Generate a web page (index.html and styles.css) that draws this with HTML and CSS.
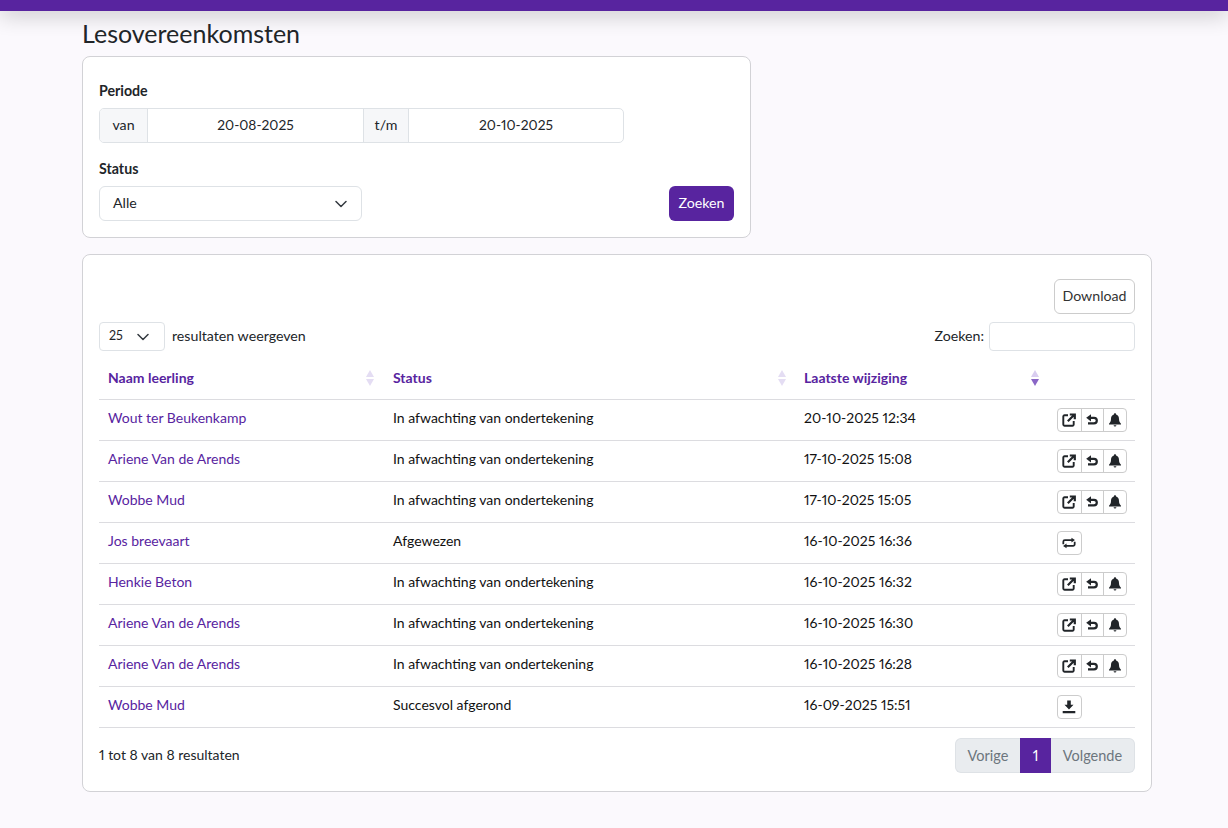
FILE: index.html
```html
<!DOCTYPE html>
<html lang="nl">
<head>
<meta charset="utf-8">
<title>Lesovereenkomsten</title>
<link rel="stylesheet" href="styles.css">
</head>
<body>
<svg width="0" height="0" class="defs">
  <symbol id="i-open" viewBox="0 0 14 14"><path d="M6 2.300H2.500A1.200 1.200 0 0 0 1.300 3.500V11.500A1.200 1.200 0 0 0 2.500 12.700H10.500A1.200 1.200 0 0 0 11.700 11.500V8" fill="none" stroke="currentColor" stroke-width="1.900"/><path d="M5.800 8.200 12 2M7.800 1.500H12.800V6.300" fill="none" stroke="currentColor" stroke-width="2.200"/></symbol>
  <symbol id="i-undo" viewBox="0 0 14 14"><path d="M4.500 4.800H9A2.800 2.800 0 0 1 9 10.400H3" fill="none" stroke="currentColor" stroke-width="2.200"/><path d="M6 1.200V8.400L1.200 4.800Z" fill="currentColor"/></symbol>
  <symbol id="i-bell" viewBox="0 0 14 14"><path d="M7 .3C7.700 .3 8.100 .8 8.100 1.400 10.300 2 11 3.800 11 6 11 8.500 11.800 9.500 13 10.800V11.500H1V10.800C2.200 9.500 3 8.500 3 6 3 3.800 3.700 2 5.900 1.400 5.900 .8 6.300 .3 7 .3ZM5.600 12.200H8.400A1.400 1.400 0 0 1 5.600 12.200Z" fill="currentColor"/></symbol>
  <symbol id="i-repeat" viewBox="0 0 16 14"><path d="M1.500 8.500V5.500A1.800 1.800 0 0 1 3.300 3.700H12M14.500 5.500V8.500A1.800 1.800 0 0 1 12.700 10.300H4" fill="none" stroke="currentColor" stroke-width="2"/><path d="M10.800 1 14.800 3.700 10.800 6.400ZM5.200 7.600 1.200 10.300 5.200 13Z" fill="currentColor"/></symbol>
  <symbol id="i-down" viewBox="0 0 14 14"><path d="M5.200 .5H8.800V4.800H11.500L7 9.500 2.500 4.800H5.200ZM.7 11H13.300V13.300H.7Z" fill="currentColor"/></symbol>
  <symbol id="i-chev" viewBox="0 0 12 8"><path d="M1 1.500 6 6.500 11 1.500" fill="none" stroke="currentColor" stroke-width="1.500" stroke-linecap="round" stroke-linejoin="round"/></symbol>
</svg>
<div class="topbar"></div>
<main class="page">
  <h1 class="title">Lesovereenkomsten</h1>
  <section class="card filter">
    <div class="label first">Periode</div>
    <div class="range">
      <span class="addon addon-van">van</span>
      <span class="date date-a">20-08-2025</span>
      <span class="addon addon-tm">t/m</span>
      <span class="date date-b">20-10-2025</span>
    </div>
    <div class="label second">Status</div>
    <div class="filter-row">
      <div class="select status-select"><span>Alle</span><svg class="chev"><use href="#i-chev"/></svg></div>
      <button class="btn-primary">Zoeken</button>
    </div>
  </section>
  <section class="card results">
    <div class="toolbar"><button class="btn-outline">Download</button></div>
    <div class="controls">
      <div class="length">
        <div class="select small-select"><span>25</span><svg class="chev"><use href="#i-chev"/></svg></div>
        <span>resultaten weergeven</span>
      </div>
      <div class="search"><span>Zoeken:</span><div class="search-input"></div></div>
    </div>
    <table class="table">
      <thead>
        <tr>
          <th class="col-name"><div class="th"><span>Naam leerling</span><span class="sort"><i class="up"></i><i class="dn"></i></span></div></th>
          <th class="col-status"><div class="th"><span>Status</span><span class="sort"><i class="up"></i><i class="dn"></i></span></div></th>
          <th class="col-date"><div class="th"><span>Laatste wijziging</span><span class="sort active"><i class="up"></i><i class="dn"></i></span></div></th>
          <th class="col-act"></th>
        </tr>
      </thead>
      <tbody>
        <tr><td><a>Wout ter Beukenkamp</a></td><td>In afwachting van ondertekening</td><td>20-10-2025 12:34</td><td><div class="group"><span><svg class="ic"><use href="#i-open"/></svg></span><span><svg class="ic"><use href="#i-undo"/></svg></span><span><svg class="ic"><use href="#i-bell"/></svg></span></div></td></tr>
        <tr><td><a>Ariene Van de Arends</a></td><td>In afwachting van ondertekening</td><td>17-10-2025 15:08</td><td><div class="group"><span><svg class="ic"><use href="#i-open"/></svg></span><span><svg class="ic"><use href="#i-undo"/></svg></span><span><svg class="ic"><use href="#i-bell"/></svg></span></div></td></tr>
        <tr><td><a>Wobbe Mud</a></td><td>In afwachting van ondertekening</td><td>17-10-2025 15:05</td><td><div class="group"><span><svg class="ic"><use href="#i-open"/></svg></span><span><svg class="ic"><use href="#i-undo"/></svg></span><span><svg class="ic"><use href="#i-bell"/></svg></span></div></td></tr>
        <tr><td><a>Jos breevaart</a></td><td>Afgewezen</td><td>16-10-2025 16:36</td><td><div class="group"><span><svg class="ic"><use href="#i-repeat"/></svg></span></div></td></tr>
        <tr><td><a>Henkie Beton</a></td><td>In afwachting van ondertekening</td><td>16-10-2025 16:32</td><td><div class="group"><span><svg class="ic"><use href="#i-open"/></svg></span><span><svg class="ic"><use href="#i-undo"/></svg></span><span><svg class="ic"><use href="#i-bell"/></svg></span></div></td></tr>
        <tr><td><a>Ariene Van de Arends</a></td><td>In afwachting van ondertekening</td><td>16-10-2025 16:30</td><td><div class="group"><span><svg class="ic"><use href="#i-open"/></svg></span><span><svg class="ic"><use href="#i-undo"/></svg></span><span><svg class="ic"><use href="#i-bell"/></svg></span></div></td></tr>
        <tr><td><a>Ariene Van de Arends</a></td><td>In afwachting van ondertekening</td><td>16-10-2025 16:28</td><td><div class="group"><span><svg class="ic"><use href="#i-open"/></svg></span><span><svg class="ic"><use href="#i-undo"/></svg></span><span><svg class="ic"><use href="#i-bell"/></svg></span></div></td></tr>
        <tr><td><a>Wobbe Mud</a></td><td>Succesvol afgerond</td><td>16-09-2025 15:51</td><td><div class="group"><span><svg class="ic"><use href="#i-down"/></svg></span></div></td></tr>
      </tbody>
    </table>
    <div class="footer">
      <div class="info">1 tot 8 van 8 resultaten</div>
      <div class="pager"><span class="pg pg-prev">Vorige</span><span class="pg pg-cur">1</span><span class="pg pg-next">Volgende</span></div>
    </div>
  </section>
</main>
</body>
</html>
```
FILE: styles.css
```css
* { box-sizing: border-box; }
html, body { margin: 0; padding: 0; }
body {
  height: 828px;
  overflow: hidden;
  background: #fbf9fd;
  color: #212529;
  font-family: "Lato", "Liberation Sans", sans-serif;
  font-size: 14.2px;
  font-variant-numeric: proportional-nums;
}
.defs { position: absolute; }
.topbar {
  height: 11px;
  background: #58249f;
  box-shadow: 0 2px 22px rgba(0,0,0,.3);
}
.page { width: 1070px; margin-left: 82px; }
.title {
  margin: 0;
  height: 45px;
  padding-top: 7px;
  font-size: 25px;
  font-weight: 400;
  line-height: 30px;
}
.card {
  background: #fff;
  border: 1px solid #d2d2d6;
  border-radius: 8px;
}
.filter {
  width: 669px;
  height: 182px;
  padding: 0 16px;
}
.label { font-weight: 700; line-height: 20px; }
.label.first { padding-top: 24px; height: 51px; }
.label.second { height: 20px; margin-top: 16px; margin-bottom: 7px; }
.range {
  display: flex;
  width: 525px;
  height: 35px;
  border: 1px solid #dee2e6;
  border-radius: 5px;
  overflow: hidden;
}
.addon {
  display: flex;
  align-items: center;
  justify-content: center;
  padding-bottom: 2px;
  background: #f6f7f9;
}
.addon-van { width: 48px; border-right: 1px solid #dee2e6; }
.addon-tm { width: 46px; border-left: 1px solid #dee2e6; border-right: 1px solid #dee2e6; }
.date { display: flex; align-items: center; justify-content: center; padding-bottom: 2px; font-size: 13.800px; }
.date-a { width: 215px; }
.date-b { flex: 1; }
.filter-row { display: flex; justify-content: space-between; }
.select {
  display: flex;
  align-items: center;
  justify-content: space-between;
  background: #fff;
  border: 1px solid #dee2e6;
  border-radius: 6px;
}
.select > span { padding-bottom: 2px; }
.status-select { width: 263px; height: 35px; padding: 0 14px 0 13px; }
.chev { width: 12px; height: 8px; color: #343a40; }
.btn-primary {
  width: 65px;
  height: 35px;
  border: 0;
  border-radius: 6px;
  background: #58249f;
  color: #fff;
  font: inherit;
  padding: 0 0 2px;
}
.results {
  height: 538px;
  margin-top: 16px;
  padding: 24px 16px 0;
}
.toolbar { display: flex; justify-content: flex-end; height: 35px; }
.btn-outline {
  width: 81px;
  height: 35px;
  background: #fff;
  border: 1px solid #ccc;
  border-radius: 6px;
  color: #333;
  font: inherit;
  padding: 0 0 3px;
}
.controls {
  display: flex;
  justify-content: space-between;
  align-items: center;
  margin-top: 8px;
  height: 29px;
}
.length, .search { display: flex; align-items: center; }
.length > span, .search > span { padding-bottom: 2px; }
.small-select {
  width: 66px;
  height: 29px;
  padding: 0 15px 0 9px;
  margin-right: 7px;
  border-radius: 4px;
  font-size: 12.500px;
}
.search-input {
  width: 146px;
  height: 29px;
  margin-left: 5px;
  background: #fff;
  border: 1px solid #dee2e6;
  border-radius: 4px;
}
.table {
  width: 1036px;
  margin-top: 7px;
  border-collapse: collapse;
  table-layout: fixed;
  color: #111;
  font-size: 14px;
}
.table th {
  height: 41px;
  padding: 0;
  text-align: left;
  border-bottom: 1px solid #dcdce0;
  color: #58249f;
  font-weight: 700;
}
.col-name { width: 285px; }
.col-status { width: 411px; }
.col-date { width: 250px; }
.th {
  display: flex;
  align-items: center;
  justify-content: space-between;
  padding: 0 0 0 9px;
}
.th > span:first-child { padding-bottom: 1px; }
.sort { display: flex; flex-direction: column; gap: 2px; margin-right: 10px; }
.col-status .sort { margin-right: 9px; }
.col-date .sort { margin-right: 6px; }
.sort i {
  display: block;
  width: 0;
  height: 0;
  border-left: 4px solid transparent;
  border-right: 4px solid transparent;
}
.sort .up { border-bottom: 7px solid #e4ddf3; }
.sort .dn { border-top: 7px solid #e4ddf3; }
.sort.active .up { border-bottom-color: #d9cdf0; }
.sort.active .dn { border-top-color: #8a66c6; }
.table td {
  height: 41px;
  padding: 0 0 5px 9px;
  border-bottom: 1px solid #dcdce0;
  vertical-align: middle;
}
.table a { color: #58249f; text-decoration: none; }
.table td:last-child { padding: 0 0 0 12px; }
.group {
  display: inline-flex;
  vertical-align: middle;
  height: 24px;
  background: #fff;
  border: 1px solid #ccc;
  border-radius: 4px;
  color: #212529;
}
.group span {
  display: flex;
  width: 22.670px;
  align-items: center;
  justify-content: center;
}
.group span + span { border-left: 1px solid #ccc; }
.ic { width: 14px; height: 14px; }
.footer {
  display: flex;
  justify-content: space-between;
  align-items: center;
  margin-top: 10px;
  height: 35px;
}
.info { font-size: 14px; padding-bottom: 2px; }
.pager {
  display: flex;
  height: 35px;
  border-radius: 6px;
  overflow: hidden;
  background: #e9ecef;
  color: #6c757d;
  font-size: 14.500px;
}
.pg { display: flex; align-items: center; justify-content: center; }
.pg-prev { width: 65px; border: 1px solid #dee2e6; border-right: 0; border-radius: 6px 0 0 6px; }
.pg-cur { width: 31px; background: #58249f; color: #fff; }
.pg-next { width: 84px; border: 1px solid #dee2e6; border-left: 0; border-radius: 0 6px 6px 0; }
```
